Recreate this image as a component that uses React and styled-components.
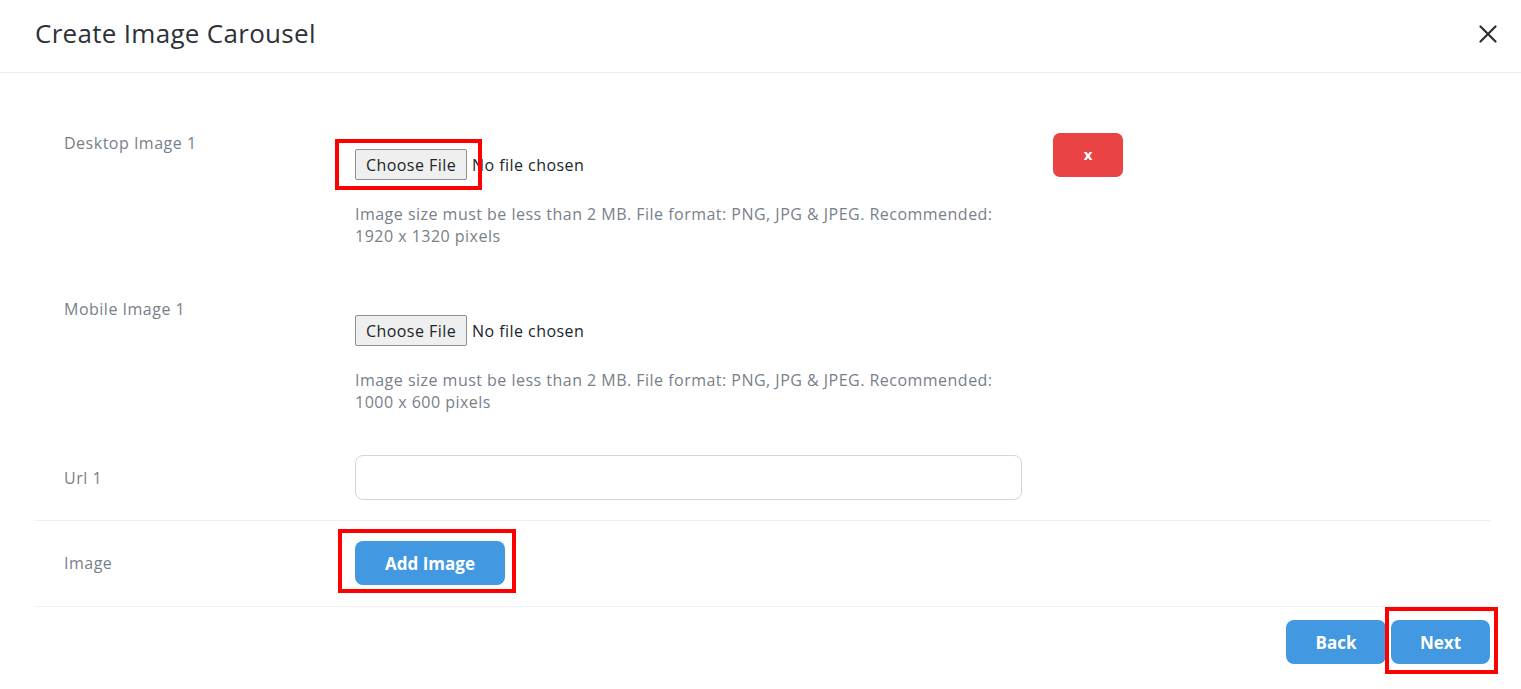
import styled, { createGlobalStyle } from "styled-components";

const GlobalStyle = createGlobalStyle`
  html, body { margin: 0; padding: 0; background: #fff; }
  body { font-family: "Open Sans", "Liberation Sans", sans-serif; color: #212529; }
  *, *::before, *::after { box-sizing: border-box; }
`;

const Modal = styled.div`
  width: 1521px;
  min-height: 689px;
  background: #fff;
`;

const Header = styled.div`
  height: 73px;
  display: flex;
  align-items: center;
  justify-content: space-between;
  padding: 0 22px 0 35px;
  border-bottom: 1px solid #ececec;
`;

const Title = styled.h2`
  margin: 0;
  font-size: 26px;
  font-weight: 400;
  color: #2d3239;
  letter-spacing: 0.3px;
  padding-bottom: 6px;
`;

const CloseBtn = styled.button`
  border: none;
  background: transparent;
  padding: 0;
  width: 22px;
  height: 22px;
  cursor: pointer;
  display: flex;
  align-items: center;
  justify-content: center;
  margin-bottom: 4px;
`;

const Body = styled.div`
  padding: 58px 31px 0 35px;
`;

const Row = styled.div`
  display: flex;
  align-items: ${({ $center }) => ($center ? "center" : "flex-start")};
  padding-left: 29px;
  margin-bottom: ${({ $mb }) => $mb || 0}px;
`;

const Label = styled.div`
  width: 291px;
  flex-shrink: 0;
  font-size: 16px;
  line-height: 24px;
  letter-spacing: 0.5px;
  color: #78808a;
`;

const Field = styled.div`
  width: 667px;
  flex-shrink: 0;
  padding-top: ${({ $pt }) => $pt || 0}px;
`;

const Highlight = styled.span`
  position: relative;
  display: inline-block;
  vertical-align: top;
  &::after {
    content: "";
    position: absolute;
    top: ${({ $t }) => $t}px;
    left: ${({ $l }) => $l}px;
    width: ${({ $w }) => $w}px;
    height: ${({ $h }) => $h}px;
    border: 4px solid #ff0000;
    pointer-events: none;
  }
`;

const FileInput = styled.input`
  font-family: "Open Sans", "Liberation Sans", sans-serif;
  font-size: 16px;
  letter-spacing: 0.45px;
  color: #212529;
  display: block;
  &::file-selector-button {
    font-family: inherit;
    font-size: 16px;
    letter-spacing: 0.45px;
    height: 31px;
    width: 112px;
    padding: 0;
    margin-right: 5px;
    color: #212529;
    background: #efefef;
    border: 1px solid #8f8f8f;
    border-radius: 2px;
  }
`;

const Help = styled.p`
  margin: 23px 0 0;
  font-size: 16px;
  line-height: 22px;
  letter-spacing: 0.48px;
  color: #78808a;
`;

const DeleteBtn = styled.button`
  margin: 2px 0 0 31px;
  width: 70px;
  height: 44px;
  border: none;
  border-radius: 7px;
  background: #e94343;
  color: #fff;
  font-family: "Open Sans", sans-serif;
  font-weight: 700;
  font-size: 15px;
  line-height: 1;
  padding-bottom: 3px;
  cursor: pointer;
`;

const TextInput = styled.input`
  display: block;
  width: 100%;
  height: 45px;
  border: 1px solid #cdd7e1;
  border-radius: 8px;
  padding: 0 14px;
  font-size: 16px;
  font-family: inherit;
  outline: none;
`;

const Divider = styled.div`
  height: 1px;
  background: #efefef;
  margin: ${({ $m }) => $m};
`;

const BlueBtn = styled.button`
  display: block;
  width: ${({ $w }) => $w}px;
  height: 44px;
  border: none;
  border-radius: 8px;
  background: #4299e1;
  color: #fff;
  font-family: "Open Sans", sans-serif;
  font-weight: 700;
  font-size: 17px;
  cursor: pointer;
`;

const Footer = styled.div`
  display: flex;
  justify-content: flex-end;
  gap: 5px;
`;

function FileRow({ label, help, highlight, children, mb }) {
  const input = <FileInput type="file" />;
  return (
    <Row $mb={mb}>
      <Label>{label}</Label>
      <Field $pt={18}>
        {highlight ? (
          <Highlight $t={-10} $l={-20} $w={147} $h={51}>
            {input}
          </Highlight>
        ) : (
          input
        )}
        <Help>{help}</Help>
      </Field>
      {children}
    </Row>
  );
}

export default function App() {
  return (
    <>
      <GlobalStyle />
      <Modal>
        <Header>
          <Title>Create Image Carousel</Title>
          <CloseBtn aria-label="close">
            <svg width="18" height="18" viewBox="0 0 18 18">
              <path d="M1.5 1.5 L16.5 16.5 M16.5 1.5 L1.5 16.5" stroke="#2b2f36" strokeWidth="2.2" strokeLinecap="round" />
            </svg>
          </CloseBtn>
        </Header>
        <Body>
          <FileRow
            label="Desktop Image 1"
            highlight
            mb={50}
            help={
              <>
                Image size must be less than 2 MB. File format: PNG, JPG &amp; JPEG. Recommended:
                <br />
                1920 x 1320 pixels
              </>
            }
          >
            <DeleteBtn>x</DeleteBtn>
          </FileRow>
          <FileRow
            label="Mobile Image 1"
            mb={42}
            help={
              <>
                Image size must be less than 2 MB. File format: PNG, JPG &amp; JPEG. Recommended:
                <br />
                1000 x 600 pixels
              </>
            }
          />
          <Row $center>
            <Label>Url 1</Label>
            <Field>
              <TextInput type="text" />
            </Field>
          </Row>
          <Divider $m="20px 0 20px" />
          <Row $center>
            <Label>Image</Label>
            <Field>
              <Highlight $t={-12} $l={-17} $w={178} $h={64}>
                <BlueBtn $w={150}>Add Image</BlueBtn>
              </Highlight>
            </Field>
          </Row>
          <Divider $m="21px 0 13px" />
          <Footer>
            <BlueBtn $w={100}>Back</BlueBtn>
            <Highlight $t={-13} $l={-6} $w={113} $h={67}>
              <BlueBtn $w={99}>Next</BlueBtn>
            </Highlight>
          </Footer>
        </Body>
      </Modal>
    </>
  );
}
